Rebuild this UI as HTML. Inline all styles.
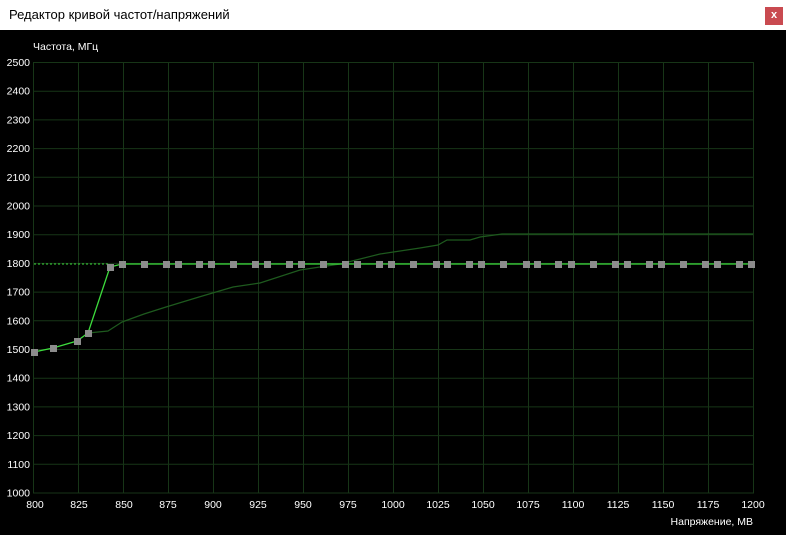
<!DOCTYPE html>
<html><head><meta charset="utf-8"><style>
body{margin:0;width:786px;height:535px;overflow:hidden;background:#000;font-family:"Liberation Sans",sans-serif}
.tb{position:absolute;left:0;top:0;width:786px;height:30px;background:#fff}
.tt{position:absolute;left:9px;top:7px;font-size:13px;color:#000}
.cl{position:absolute;left:765px;top:7px;width:18px;height:18px;background:#c94a50;color:#fff;font-size:11px;font-weight:bold;text-align:center;line-height:17px}
</style></head><body>
<div class="tb"><div class="tt">Редактор кривой частот/напряжений</div><div class="cl">x</div></div>
<svg style="position:absolute;left:0;top:0" width="786" height="535" font-family="Liberation Sans, sans-serif" font-size="10.5" fill="#fff">
<g stroke="#173517" stroke-width="1">
<line x1="33.5" y1="62" x2="33.5" y2="493"/><line x1="78.5" y1="62" x2="78.5" y2="493"/><line x1="123.5" y1="62" x2="123.5" y2="493"/><line x1="168.5" y1="62" x2="168.5" y2="493"/><line x1="213.5" y1="62" x2="213.5" y2="493"/><line x1="258.5" y1="62" x2="258.5" y2="493"/><line x1="303.5" y1="62" x2="303.5" y2="493"/><line x1="348.5" y1="62" x2="348.5" y2="493"/><line x1="393.5" y1="62" x2="393.5" y2="493"/><line x1="438.5" y1="62" x2="438.5" y2="493"/><line x1="483.5" y1="62" x2="483.5" y2="493"/><line x1="528.5" y1="62" x2="528.5" y2="493"/><line x1="573.5" y1="62" x2="573.5" y2="493"/><line x1="618.5" y1="62" x2="618.5" y2="493"/><line x1="663.5" y1="62" x2="663.5" y2="493"/><line x1="708.5" y1="62" x2="708.5" y2="493"/><line x1="753.5" y1="62" x2="753.5" y2="493"/>
<line x1="33" y1="62.5" x2="754" y2="62.5"/><line x1="33" y1="91.2" x2="754" y2="91.2"/><line x1="33" y1="119.9" x2="754" y2="119.9"/><line x1="33" y1="148.6" x2="754" y2="148.6"/><line x1="33" y1="177.3" x2="754" y2="177.3"/><line x1="33" y1="206" x2="754" y2="206"/><line x1="33" y1="234.7" x2="754" y2="234.7"/><line x1="33" y1="263.4" x2="754" y2="263.4"/><line x1="33" y1="292.1" x2="754" y2="292.1"/><line x1="33" y1="320.8" x2="754" y2="320.8"/><line x1="33" y1="349.5" x2="754" y2="349.5"/><line x1="33" y1="378.2" x2="754" y2="378.2"/><line x1="33" y1="406.9" x2="754" y2="406.9"/><line x1="33" y1="435.6" x2="754" y2="435.6"/><line x1="33" y1="464.3" x2="754" y2="464.3"/><line x1="33" y1="493" x2="754" y2="493"/>
</g>
<polyline fill="none" stroke="#1e5a1e" stroke-width="1.2" points="88,333 108,331 122,322 144,314 166,307 199,297 233,287 260,283 300,270 340,264 380,254 420,248 438,245 447,240 470,240 480,237 502,234 753,234"/>
<line x1="34" y1="264" x2="110" y2="264" stroke="#3ddc3d" stroke-dasharray="2,2"/>
<polyline fill="none" stroke="#3ddc3d" stroke-width="1.3" points="34,352 53,348 77,341 88,333 110,267 122,264 753,264"/>
<g fill="#8c8c8c">
<rect x="31" y="349" width="7" height="7"/><rect x="50" y="345" width="7" height="7"/><rect x="74" y="338" width="7" height="7"/><rect x="85" y="330" width="7" height="7"/><rect x="107" y="264" width="7" height="7"/>
<rect x="119" y="261" width="7" height="7"/><rect x="141" y="261" width="7" height="7"/><rect x="163" y="261" width="7" height="7"/><rect x="175" y="261" width="7" height="7"/><rect x="196" y="261" width="7" height="7"/><rect x="208" y="261" width="7" height="7"/><rect x="230" y="261" width="7" height="7"/><rect x="252" y="261" width="7" height="7"/><rect x="264" y="261" width="7" height="7"/><rect x="286" y="261" width="7" height="7"/><rect x="298" y="261" width="7" height="7"/><rect x="320" y="261" width="7" height="7"/><rect x="342" y="261" width="7" height="7"/><rect x="354" y="261" width="7" height="7"/><rect x="376" y="261" width="7" height="7"/><rect x="388" y="261" width="7" height="7"/><rect x="410" y="261" width="7" height="7"/><rect x="433" y="261" width="7" height="7"/><rect x="444" y="261" width="7" height="7"/><rect x="466" y="261" width="7" height="7"/><rect x="478" y="261" width="7" height="7"/><rect x="500" y="261" width="7" height="7"/><rect x="523" y="261" width="7" height="7"/><rect x="534" y="261" width="7" height="7"/><rect x="555" y="261" width="7" height="7"/><rect x="568" y="261" width="7" height="7"/><rect x="590" y="261" width="7" height="7"/><rect x="612" y="261" width="7" height="7"/><rect x="624" y="261" width="7" height="7"/><rect x="646" y="261" width="7" height="7"/><rect x="658" y="261" width="7" height="7"/><rect x="680" y="261" width="7" height="7"/><rect x="702" y="261" width="7" height="7"/><rect x="714" y="261" width="7" height="7"/><rect x="736" y="261" width="7" height="7"/><rect x="748" y="261" width="7" height="7"/>
</g>
<text x="33" y="50">Частота, МГц</text>
<g text-anchor="end">
<text x="30" y="66">2500</text><text x="30" y="94.7">2400</text><text x="30" y="123.4">2300</text><text x="30" y="152.1">2200</text><text x="30" y="180.8">2100</text><text x="30" y="209.5">2000</text><text x="30" y="238.2">1900</text><text x="30" y="266.9">1800</text><text x="30" y="295.6">1700</text><text x="30" y="324.3">1600</text><text x="30" y="353">1500</text><text x="30" y="381.7">1400</text><text x="30" y="410.4">1300</text><text x="30" y="439.1">1200</text><text x="30" y="467.8">1100</text><text x="30" y="496.5">1000</text>
</g>
<g text-anchor="middle">
<text x="35" y="508">800</text><text x="79" y="508">825</text><text x="124" y="508">850</text><text x="168" y="508">875</text><text x="213" y="508">900</text><text x="258" y="508">925</text><text x="303" y="508">950</text><text x="348" y="508">975</text><text x="393" y="508">1000</text><text x="438" y="508">1025</text><text x="483" y="508">1050</text><text x="528" y="508">1075</text><text x="573" y="508">1100</text><text x="618" y="508">1125</text><text x="663" y="508">1150</text><text x="708" y="508">1175</text><text x="753" y="508">1200</text>
</g>
<text x="753" y="525" text-anchor="end">Напряжение, МВ</text>
</svg>
</body></html>
